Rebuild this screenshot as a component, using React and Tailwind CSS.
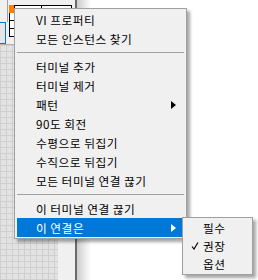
import React from "react";

const Arrow = ({ color = "#000" }) => (
  <svg width="5" height="8" viewBox="0 0 5 8" className="absolute right-[8px] top-[6px]">
    <path d="M0 0 L5 4 L0 8 Z" fill={color} />
  </svg>
);

const Check = () => (
  <svg width="8" height="8" viewBox="0 0 8 8" className="absolute left-[8px] top-[5px]">
    <path d="M1 4.5 L3 7 L7 0.5" fill="none" stroke="#000" strokeWidth="1.2" />
  </svg>
);

const Item = ({ label, active, arrow }) => (
  <div
    className={`relative h-[19px] pl-[19px] leading-[19px] whitespace-nowrap ${
      active ? "bg-[#0078d7] text-white" : "text-black"
    }`}
  >
    {label}
    {arrow && <Arrow color={active ? "#fff" : "#000"} />}
  </div>
);

const Separator = () => (
  <div className="h-[9px] flex items-center">
    <div className="h-px w-full bg-[#a0a0a0]" />
  </div>
);

const SubItem = ({ label, checked }) => (
  <div className="relative h-[18px] pl-[20px] leading-[18px] text-black whitespace-nowrap">
    {checked && <Check />}
    {label}
  </div>
);

export default function App() {
  return (
    <div className="relative w-[258px] h-[280px] overflow-hidden bg-white flex font-['Noto_Sans_CJK_KR','Noto_Sans',sans-serif] text-[11.7px] tracking-[0.5px]">
      {/* diagram background */}
      <div className="w-[75px] flex flex-col">
        <div className="h-[44px] flex bg-[#f0f0f0]">
          <div className="w-[8px] flex flex-col">
            <div className="h-[22px] border-r border-[#a0a0a0]" />
            <div className="h-[22px] w-[6px] border-y border-r border-[#0078d7] bg-[#e6e6e6]" />
          </div>
          <div className="ml-[1px] mt-[5px] flex flex-col">
            <div className="flex h-[8px]">
              <div className="w-[5px] bg-[#ff8000]" />
              <div className="w-[28px] border border-black bg-white" />
              <div className="w-[30px] border border-l-0 border-black bg-white" />
            </div>
            {[0, 1, 2].map((i) => (
              <div key={i} className="flex h-[8px]">
                <div className="w-[6px] border-x border-b border-black bg-white" />
              </div>
            ))}
          </div>
        </div>
        <div className="h-px bg-[#b4b4b4]" />
        <div className="flex-1 flex">
          <div className="w-[58px] bg-[#e2e2e2] bg-[linear-gradient(to_right,#cfcfcf_1px,transparent_1px),linear-gradient(to_bottom,#cfcfcf_1px,transparent_1px)] bg-[size:6px_6px]" />
          <div className="flex-1 bg-[#f0f0f0]" />
        </div>
      </div>
      <div className="w-[2px] bg-[#6b6b6b]" />
      <div className="w-[14px] bg-[linear-gradient(to_right,#cdcdcd,#ffffff)]" />
      <div className="flex-1 bg-white" />

      {/* context menu */}
      <div className="absolute left-[14px] top-[8px] w-[173px] border border-[#a0a0a0] bg-[#f0f0f0] px-[2px] py-[1px] shadow-[3px_3px_3px_rgba(0,0,0,0.35)]">
        <Item label="VI 프로퍼티" />
        <Item label="모든 인스턴스 찾기" />
        <Separator />
        <Item label="터미널 추가" />
        <Item label="터미널 제거" />
        <Item label="패턴" arrow />
        <Item label="90도 회전" />
        <Item label="수평으로 뒤집기" />
        <Item label="수직으로 뒤집기" />
        <Item label="모든 터미널 연결 끊기" />
        <Separator />
        <Item label="이 터미널 연결 끊기" />
        <Item label="이 연결은" active arrow />
      </div>

      {/* submenu */}
      <div className="absolute left-[182px] top-[217px] w-[71px] border border-[#a0a0a0] bg-[#f0f0f0] py-[1px] shadow-[3px_3px_3px_rgba(0,0,0,0.35)]">
        <SubItem label="필수" />
        <SubItem label="권장" checked />
        <SubItem label="옵션" />
      </div>
    </div>
  );
}
